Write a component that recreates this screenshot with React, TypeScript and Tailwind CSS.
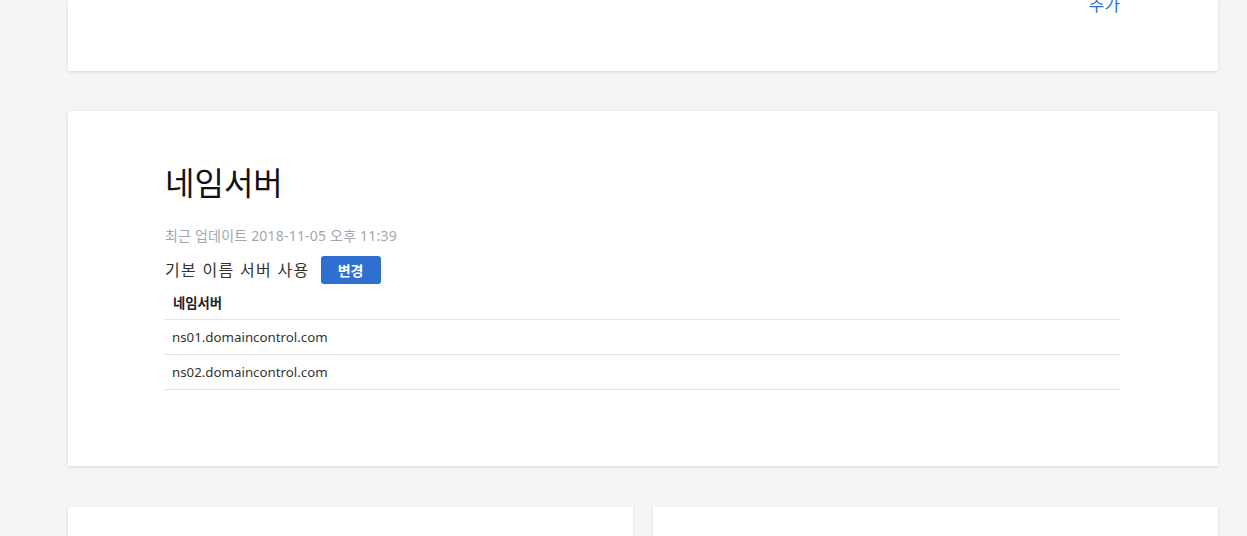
import React from 'react';

const App: React.FC = () => {
  const servers = ['ns01.domaincontrol.com', 'ns02.domaincontrol.com'];

  return (
    <div
      className="h-[536px] bg-[#f4f5f7] pl-[68px] pr-[29px] overflow-hidden"
      style={{ fontFamily: '"Noto Sans", "Noto Sans CJK KR", sans-serif' }}
    >
      {/* previous card (cut off at top) */}
      <div className="bg-white h-[71px] shadow-[0_1px_3px_rgba(0,0,0,0.12)] flex justify-end pr-[98px]">
        <span className="text-[17px] leading-none -mt-[4px] text-[#2f6fce]">추가</span>
      </div>

      {/* nameserver card */}
      <div className="mt-[40px] bg-white h-[355px] shadow-[0_1px_3px_rgba(0,0,0,0.12)] pl-[97px] pr-[98px] pt-[50px]">
        <h2 className="text-[32px] leading-[44px] text-[#111]">네임서버</h2>
        <p className="mt-[21px] text-[14px] tracking-[0.2px] leading-[20px] text-[#a3a7ad]">최근 업데이트 2018-11-05 오후 11:39</p>
        <div className="mt-[9px] flex items-center h-[30px]">
          <span className="text-[16px] text-[#333] tracking-[1.3px]">기본 이름 서버 사용</span>
          <button className="ml-[11px] w-[60px] h-[28px] rounded-[3px] bg-[#2f6fd1] text-white text-[14px] font-bold">
            변경
          </button>
        </div>
        <table className="mt-[4px] w-full text-[13.3px] text-[#333]">
          <thead>
            <tr className="border-b border-[#e3e3e3]">
              <th className="text-left font-bold h-[30px] px-[8px] text-[#222]">네임서버</th>
            </tr>
          </thead>
          <tbody>
            {servers.map(s => (
              <tr key={s} className="border-b border-[#e3e3e3]">
                <td className="h-[35px] px-[7px] pt-[3px]">{s}</td>
              </tr>
            ))}
          </tbody>
        </table>
      </div>

      {/* next cards */}
      <div className="mt-[41px] grid grid-cols-2 gap-[20px]">
        <div className="bg-white h-[100px] shadow-[0_1px_3px_rgba(0,0,0,0.12)]" />
        <div className="bg-white h-[100px] shadow-[0_1px_3px_rgba(0,0,0,0.12)]" />
      </div>
    </div>
  );
};

export default App;
